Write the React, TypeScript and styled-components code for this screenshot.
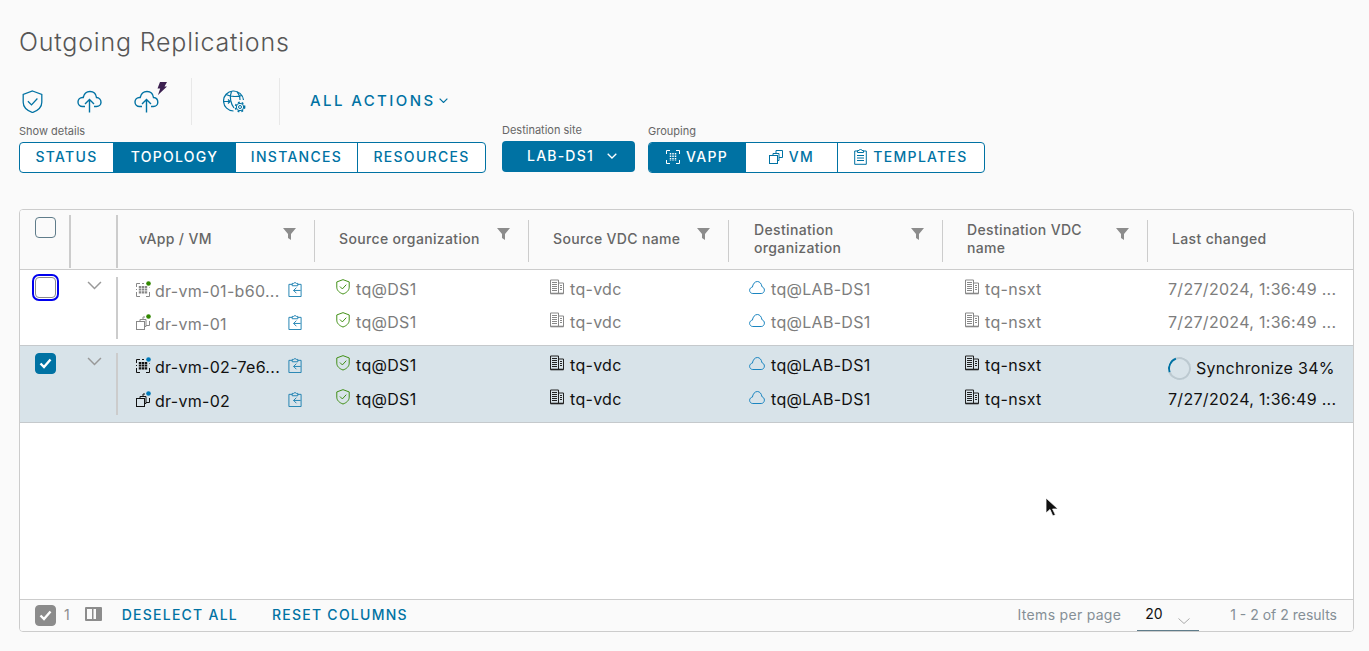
import styled, { createGlobalStyle } from "styled-components";

const GlobalStyle = createGlobalStyle`
  html, body {
    margin: 0;
    background: #fafafa;
    font-family: Inter, "Noto Sans", "Liberation Sans", sans-serif;
  }
  * { box-sizing: border-box; }
`;

const BLUE = "#0072a3";
const HEAD_COLS = "197px 214px 200px 214px 205px 1fr";
const LINE_COLS = "196px 214px 200px 214px 205px 1fr";

const Page = styled.div`
  position: relative;
  width: 1369px;
  height: 651px;
  padding: 0 15px 0 19px;
  overflow: hidden;
`;
const Title = styled.h1`
  margin: 0;
  height: 78px;
  padding-top: 26px;
  font-size: 25px;
  line-height: 32px;
  font-weight: 300;
  letter-spacing: 0.8px;
  color: #565656;
`;
const Toolbar = styled.div`
  display: flex;
  align-items: stretch;
  height: 47px;
  margin-left: -14px;
`;
const ToolButton = styled.div`
  width: 57px;
  display: flex;
  align-items: center;
  justify-content: center;
  padding: 0 2px 0 0;
`;
const ToolSep = styled.div`
  width: 1px;
  margin: 0 15px;
  background: #e8e8e8;
`;
const ActionsLabel = styled.div`
  display: flex;
  align-items: center;
  gap: 3px;
  margin-left: 15px;
  padding-bottom: 2px;
  font-size: 15px;
  font-weight: 500;
  letter-spacing: 2.4px;
  color: ${BLUE};
`;
const Filters = styled.div`
  display: flex;
  align-items: flex-start;
  height: 84px;
`;
const FilterGroup = styled.div<{ $w: number; $up?: boolean }>`
  width: ${(p) => p.$w}px;
  margin-top: ${(p) => (p.$up ? "-1px" : "0")};
`;
const FilterLabel = styled.div`
  height: 17px;
  font-size: 11px;
  line-height: 13px;
  color: #666;
`;
const Segmented = styled.div`
  display: inline-flex;
  height: 31px;
  border: 1px solid ${BLUE};
  border-radius: 4px;
  overflow: hidden;
  background: #fff;
`;
const Segment = styled.div<{ $w: number; $on?: boolean }>`
  width: ${(p) => p.$w}px;
  display: flex;
  align-items: center;
  justify-content: center;
  gap: 6px;
  padding-bottom: 2px;
  font-size: 14px;
  font-weight: 500;
  letter-spacing: 1.3px;
  color: ${(p) => (p.$on ? "#fff" : BLUE)};
  background: ${(p) => (p.$on ? BLUE : "transparent")};
  & + & {
    border-left: 1px solid ${BLUE};
  }
`;
const SiteButton = styled.div`
  width: 133px;
  height: 31px;
  display: flex;
  align-items: center;
  justify-content: center;
  gap: 13px;
  padding: 0 0 2px 7px;
  border-radius: 4px;
  background: ${BLUE};
  color: #fff;
  font-size: 14px;
  font-weight: 500;
  letter-spacing: 1.2px;
`;
const Card = styled.div`
  height: 423px;
  display: flex;
  flex-direction: column;
  border: 1px solid #ccc;
  border-radius: 4px;
  background: #fff;
  overflow: hidden;
`;
const HeadRow = styled.div`
  display: grid;
  grid-template-columns: 51px 47px ${HEAD_COLS};
  height: 60px;
  background: #fafafa;
  border-bottom: 1px solid #ccc;
`;
const CheckCell = styled.div`
  margin: 5px 0 1px;
  padding: 2px 0 0 15px;
  border-right: 2px solid #ccc;
`;
const EmptyHead = styled.div`
  margin: 5px 0 1px;
  border-right: 2px solid #ccc;
`;
const HeadCell = styled.div<{ $pad: number; $last?: boolean }>`
  position: relative;
  display: flex;
  align-items: center;
  margin: 10px 0 7px;
  padding: 0 40px 4px ${(p) => p.$pad}px;
  border-right: ${(p) => (p.$last ? "none" : "1px solid #ccc")};
  font-size: 14px;
  font-weight: 500;
  line-height: 18px;
  letter-spacing: 0.35px;
  color: #666;
`;
const FilterIcon = styled.svg`
  position: absolute;
  right: 18px;
  top: 8px;
  width: 13px;
  height: 12px;
`;
const Box = styled.div<{ $state?: "on" | "focus" | "muted" }>`
  width: 21px;
  height: 21px;
  display: flex;
  align-items: center;
  justify-content: center;
  border-radius: 4px;
  border: 1px solid ${(p) => (p.$state === "on" ? BLUE : p.$state === "muted" ? "#8c8c8c" : "#5f7c8a")};
  background: ${(p) => (p.$state === "on" ? BLUE : p.$state === "muted" ? "#8c8c8c" : "transparent")};
  ${(p) => (p.$state === "focus" ? "outline: 2px solid #0000ee; outline-offset: 1px; border-color: #8a8a8a;" : "")}
`;
const RowGroup = styled.div<{ $sel?: boolean }>`
  display: grid;
  grid-template-columns: 50px 47px 1fr;
  height: ${(p) => (p.$sel ? "77px" : "76px")};
  padding-top: 7px;
  background: ${(p) => (p.$sel ? "#d8e3e9" : "#fff")};
  border-bottom: 1px solid #c5c9cc;
  color: ${(p) => (p.$sel ? "#111" : "#7d7d7d")};
`;
const RowCheck = styled.div`
  padding-left: 15px;
`;
const RowChevron = styled.div`
  display: flex;
  align-items: flex-start;
  padding: 4px 0 0 17px;
`;
const Lines = styled.div<{ $sel?: boolean }>`
  display: flex;
  flex-direction: column;
  gap: ${(p) => (p.$sel ? "1px" : "0")};
  height: 62px;
  margin-left: -1px;
  border-left: 2px solid #ccc;
`;
const Line = styled.div`
  display: grid;
  flex: none;
  grid-template-columns: ${LINE_COLS};
  height: 33px;
  font-size: 16px;
  letter-spacing: 0.3px;
  &:first-child {
    margin-top: -4px;
  }
`;
const NameCell = styled.div`
  display: flex;
  align-items: center;
  padding: 0 12px 0 18px;
`;
const Name = styled.span`
  flex: 1;
  min-width: 0;
  margin-left: 4px;
  white-space: nowrap;
  padding-top: 3px;
`;
const Cell = styled.div<{ $pad: number; $gap?: number }>`
  display: flex;
  align-items: center;
  gap: ${(p) => p.$gap ?? 6}px;
  padding: 0 0 2px ${(p) => p.$pad}px;
  white-space: nowrap;
`;
const Spinner = styled.span`
  width: 23px;
  height: 23px;
  margin-top: 7px;
  border-radius: 50%;
  border: 2px solid #bcc9d0;
  border-left-color: ${BLUE};
  transform: rotate(25deg);
`;
const SyncText = styled.span`
  padding-top: 7px;
`;
const Fill = styled.div`
  flex: 1;
`;
const Footer = styled.div`
  display: flex;
  align-items: center;
  height: 32px;
  padding: 0 16px 0 15px;
  border-top: 1px solid #ccc;
  background: #fafafa;
  font-size: 14px;
  color: #858f96;
`;
const FootText = styled.span`
  margin-top: -3px;
`;
const ItemsLabel = styled(FootText)`
  letter-spacing: 0.3px;
`;
const Count = styled.span`
  margin: -2px 0 0 8px;
  color: #8c8c8c;
`;
const ColumnsIcon = styled.svg`
  margin: -4px 0 0 15px;
`;
const FootLink = styled.span<{ $ml: number }>`
  margin: -3px 0 0 ${(p) => p.$ml}px;
  font-weight: 500;
  letter-spacing: 1.25px;
  color: ${BLUE};
`;
const PageSize = styled.div`
  position: relative;
  width: 62px;
  height: 31px;
  margin: 0 31px 0 16px;
  padding: 5px 0 0 8px;
  border-bottom: 1px solid #5f7c8a;
  line-height: 18px;
  color: #111;
`;
const PageChevron = styled.svg`
  position: absolute;
  right: 9px;
  top: 18px;
`;
const Cursor = styled.svg`
  position: absolute;
  left: 1045px;
  top: 497px;
`;
const ShieldWrap = styled.span`
  display: flex;
  margin-top: -3px;
`;

const Chevron = ({ w, color, sw = 1.3 }: { w: number; color: string; sw?: number }) => (
  <svg width={w} height={w * 0.6} viewBox="0 0 10 6" fill="none" stroke={color} strokeWidth={sw}>
    <path d="M.7.7 5 5l4.3-4.3" />
  </svg>
);

const Check = ({ color = "#fff" }: { color?: string }) => (
  <svg width="13" height="11" viewBox="0 0 13 11" fill="none" stroke={color} strokeWidth="2.4">
    <path d="M1.5 5.5 5 9l6.5-7.5" />
  </svg>
);

const ShieldIcon = ({ size, color, sw }: { size: number; color: string; sw: number }) => (
  <svg width={size} height={size * 1.12} viewBox="0 0 21 24" fill="none" stroke={color} strokeWidth={sw}>
    <path d="M10.5 1 20 4.5v8c0 5-4 8.500-9.500 10.500C5 21 1 17.500 1 12.500v-8z" />
    <path d="m5.800 11.500 3.700 3.700 6-6.500" />
  </svg>
);

const UploadCloud = () => (
  <svg width="25" height="23" viewBox="0 0 25 23" fill="none" stroke={BLUE} strokeWidth="1.4">
    <path d="M8 16.500H5.500C3 16.500 1 14.500 1 12s2-4.500 4.500-4.500h.7C7 4 9.500 1.500 13 1.500c3.500 0 6 2.500 6.500 6 2.500.2 4.500 2.200 4.500 4.700s-2 4.300-4.500 4.300H17" />
    <path d="M12.500 22.500V10M8 14l4.500-4.500L17 14" />
  </svg>
);

const BoltCloud = () => (
  <svg width="33" height="31" viewBox="0 0 33 31" fill="none" style={{ marginTop: -9, marginLeft: 7 }}>
    <g stroke={BLUE} strokeWidth="1.4" transform="translate(0 8)">
      <path d="M8 16.500H5.500C3 16.500 1 14.500 1 12s2-4.500 4.500-4.500h.7C7 4 9.500 1.500 13 1.500c3.500 0 6 2.500 6.500 6 2.500.2 4.300 2.200 4.300 4.700s-2 4.300-4.300 4.300H17" />
      <path d="M12.500 22.500V10M8 14l4.500-4.500L17 14" />
    </g>
    <path d="M26 0h7l-2.500 4.500H33L24 13l2.200-6.500H23.500z" fill="#3c2050" />
  </svg>
);

const GlobeGear = () => (
  <svg width="23" height="23" viewBox="0 0 23 23" fill="none" stroke={BLUE} strokeWidth="1.200">
    <path d="M10.500 21A10 10 0 1 1 20.500 10" />
    <path d="M3 4.500c4 2 11 2.500 16 1M8.500 1.500C6 7 8 14 11 18M14 2c2 2 3 5 3 8" />
    <path d="M1 11.500h6m-2-2 2 2-2 2" />
    <circle cx="17" cy="17" r="3.700" fill="#fafafa" strokeWidth="1" />
    <circle cx="17" cy="17" r="1.500" strokeWidth="1" />
    <circle cx="17" cy="17" r="4.600" strokeWidth="1.600" strokeDasharray="1.800 2.010" />
  </svg>
);

const Vapp = ({ color }: { color: string }) => (
  <svg width="14" height="14" viewBox="0 0 14 14" fill="none" stroke={color} strokeWidth="1">
    <path d="M4 .5H.5V4M10 .5h3.500V4M4 13.500H.5V10M10 13.500h3.500V10" />
    <path d="M4.500 3v8M7 3v8M9.500 3v8" strokeWidth="1.500" strokeDasharray="1.500 1" />
  </svg>
);

const VmStack = ({ color }: { color: string }) => (
  <svg width="14" height="14" viewBox="0 0 14 14" fill="none" stroke={color} strokeWidth="1">
    <rect x=".5" y="5.500" width="8" height="8" />
    <path d="M4 5.500V3.500h6v7H8.500" />
    <path d="M7 3.500V.5h6.500v7H10" />
  </svg>
);

const Templates = () => (
  <svg width="13" height="16" viewBox="0 0 13 16" fill="none" stroke={BLUE} strokeWidth="1">
    <path d="M3.500 2H.7v13.300h11.600V2H9.500" />
    <path d="M3.500 3.500v-2h1.500a1.500 1 0 0 1 3 0h1.500v2zM3 6.500h7M3 9h7M3 11.500h7" />
  </svg>
);

const ItemIcon = ({ kind, sel }: { kind: "vapp" | "vm"; sel?: boolean }) => {
  const color = sel ? "#111" : "#888";
  return (
    <svg width="15" height="15" viewBox="0 0 15 15" fill="none" style={{ overflow: "visible", flexShrink: 0 }}>
      {kind === "vapp" ? (
        <g stroke={color}>
          <path d="M4 1.500H.5V5M.5 10v4.500H4M10 14.500h3.500V10M13.500 6V5.500M6 1.500h2M.5 7v1" />
          <path d="M4 4v8M7 4v8M10 4v8" strokeWidth="2.400" strokeDasharray="2 .6" />
        </g>
      ) : (
        <g stroke={color}>
          <rect x=".5" y="6.500" width="8" height="8" />
          <path d="M4 6.500V4.500h6v7H8.500" />
          <path d="M7 4.500V2h2M13.500 6v4.500H10" />
        </g>
      )}
      <circle cx="12.500" cy="1.500" r="2.300" fill={sel ? "#0079b8" : "#318700"} />
    </svg>
  );
};

const CopyIcon = () => (
  <svg width="14" height="15" viewBox="0 0 14 16" fill="none" stroke="#1b7fb0" strokeWidth="1" style={{ flexShrink: 0 }}>
    <path d="M4 2.500H.5v13h13v-13H10" />
    <path d="M4 4V1.500h1.500L7 .5l1.500 1H10V4zM13 9H5.500M8.500 6l-3 3 3 3" />
  </svg>
);

const SmallShield = () => (
  <ShieldWrap>
    <ShieldIcon size={14} color="#318700" sw={1.4} />
  </ShieldWrap>
);

const Building = ({ color }: { color: string }) => (
  <svg width="14" height="16" viewBox="0 0 14 16" fill="none" stroke={color} strokeWidth="1" style={{ marginTop: -3 }}>
    <path d="M.5 1h8v13.500h-8zM8.500 4h5v10.500h-5z" />
    <path d="M2 3.500h5M2 5.500h5M2 7.500h5M2 9.500h5M2 11.500h5M10 6.500h2M10 8.500h2M10 10.500h2" />
    <path d="M.5 14.500h13" strokeWidth="1.600" />
  </svg>
);

const SmallCloud = () => (
  <svg width="16" height="15" viewBox="0 0 16 15" fill="none" stroke="#1b85c0" strokeWidth="1" style={{ marginTop: -3 }}>
    <path d="M3.800 13.500C2 13.500.6 12.100.6 10.300c0-1.600 1.200-3 2.800-3.200C3.900 4 5.800 1.500 8.300 1.500c2.500 0 4.300 2.300 4.600 5.200 1.500.4 2.500 1.800 2.500 3.400 0 1.900-1.400 3.400-3.200 3.400z" />
  </svg>
);

const rows = [
  {
    sel: false,
    state: "focus" as const,
    lines: [
      { kind: "vapp" as const, name: "dr-vm-01-b60..." },
      { kind: "vm" as const, name: "dr-vm-01" },
    ],
    changed: ["7/27/2024, 1:36:49 ...", "7/27/2024, 1:36:49 ..."],
  },
  {
    sel: true,
    state: "on" as const,
    lines: [
      { kind: "vapp" as const, name: "dr-vm-02-7e6..." },
      { kind: "vm" as const, name: "dr-vm-02" },
    ],
    changed: [null, "7/27/2024, 1:36:49 ..."],
  },
];

const heads = [
  { label: "vApp / VM", pad: 21 },
  { label: "Source organization", pad: 24 },
  { label: "Source VDC name", pad: 24 },
  { label: "Destination organization", pad: 25 },
  { label: "Destination VDC name", pad: 24 },
];

function App() {
  return (
    <Page>
      <GlobalStyle />
      <Title>Outgoing Replications</Title>
      <Toolbar>
        <ToolButton>
          <ShieldIcon size={21} color={BLUE} sw={1.3} />
        </ToolButton>
        <ToolButton>
          <UploadCloud />
        </ToolButton>
        <ToolButton>
          <BoltCloud />
        </ToolButton>
        <ToolSep />
        <ToolButton>
          <GlobeGear />
        </ToolButton>
        <ToolSep />
        <ActionsLabel>
          ALL ACTIONS
          <Chevron w={9} color={BLUE} />
        </ActionsLabel>
      </Toolbar>
      <Filters>
        <FilterGroup $w={483}>
          <FilterLabel>Show details</FilterLabel>
          <Segmented>
            <Segment $w={93}>STATUS</Segment>
            <Segment $w={122} $on>TOPOLOGY</Segment>
            <Segment $w={122}>INSTANCES</Segment>
            <Segment $w={128}>RESOURCES</Segment>
          </Segmented>
        </FilterGroup>
        <FilterGroup $w={146} $up>
          <FilterLabel>Destination site</FilterLabel>
          <SiteButton>
            LAB-DS1
            <Chevron w={10} color="#fff" />
          </SiteButton>
        </FilterGroup>
        <FilterGroup $w={340}>
          <FilterLabel>Grouping</FilterLabel>
          <Segmented>
            <Segment $w={96} $on><Vapp color="#fff" />VAPP</Segment>
            <Segment $w={92}><VmStack color={BLUE} />VM</Segment>
            <Segment $w={147}><Templates />TEMPLATES</Segment>
          </Segmented>
        </FilterGroup>
      </Filters>
      <Card>
        <HeadRow>
          <CheckCell><Box /></CheckCell>
          <EmptyHead />
          {heads.map((h) => (
            <HeadCell key={h.label} $pad={h.pad}>
              {h.label}
              <FilterIcon viewBox="0 0 13 12">
                <path d="M0 0h13L8 6v6L5 10V6z" fill="#8c8c8c" />
              </FilterIcon>
            </HeadCell>
          ))}
          <HeadCell $pad={24} $last>Last changed</HeadCell>
        </HeadRow>
        {rows.map((row, r) => (
          <RowGroup key={r} $sel={row.sel}>
            <RowCheck>
              <Box $state={row.state}>{row.sel && <Check />}</Box>
            </RowCheck>
            <RowChevron>
              <Chevron w={15} color="#999" sw={1} />
            </RowChevron>
            <Lines $sel={row.sel}>
              {row.lines.map((l, i) => (
                <Line key={l.name}>
                  <NameCell>
                    <ItemIcon kind={l.kind} sel={row.sel} />
                    <Name>{l.name}</Name>
                    <CopyIcon />
                  </NameCell>
                  <Cell $pad={22}><SmallShield />tq@DS1</Cell>
                  <Cell $pad={22}><Building color={row.sel ? "#222" : "#888"} />tq-vdc</Cell>
                  <Cell $pad={21}><SmallCloud />tq@LAB-DS1</Cell>
                  <Cell $pad={23}><Building color={row.sel ? "#222" : "#888"} />tq-nsxt</Cell>
                  {row.changed[i] ? (
                    <Cell $pad={21}>{row.changed[i]}</Cell>
                  ) : (
                    <Cell $pad={21} $gap={5}><Spinner /><SyncText>Synchronize 34%</SyncText></Cell>
                  )}
                </Line>
              ))}
            </Lines>
          </RowGroup>
        ))}
        <Fill />
        <Footer>
          <Box $state="muted"><Check /></Box>
          <Count>1</Count>
          <ColumnsIcon width="17" height="14" viewBox="0 0 17 14">
            <path d="M0 1a1 1 0 0 1 1-1h15a1 1 0 0 1 1 1v12a1 1 0 0 1-1 1H1a1 1 0 0 1-1-1z" fill="#8c8c8c" />
            <path d="M2 2h5v10H2zM8.500 2H11v10H8.500z" fill="#fafafa" />
          </ColumnsIcon>
          <FootLink $ml={20}>DESELECT ALL</FootLink>
          <FootLink $ml={34}>RESET COLUMNS</FootLink>
          <Fill />
          <ItemsLabel>Items per page</ItemsLabel>
          <PageSize>
            20
            <PageChevron width="12" height="6" viewBox="0 0 12 6" fill="none" stroke="#aaa">
              <path d="m.5.5 5.500 5 5.500-5" />
            </PageChevron>
          </PageSize>
          <FootText>1 - 2 of 2 results</FootText>
        </Footer>
      </Card>
      <Cursor width="14" height="21" viewBox="0 0 14 21">
        <path d="M1 1v15l4-3.500 2.800 6.500 2.600-1.200L7.600 12H13z" fill="#111" stroke="#fff" strokeWidth=".8" />
      </Cursor>
    </Page>
  );
}

export default App;
